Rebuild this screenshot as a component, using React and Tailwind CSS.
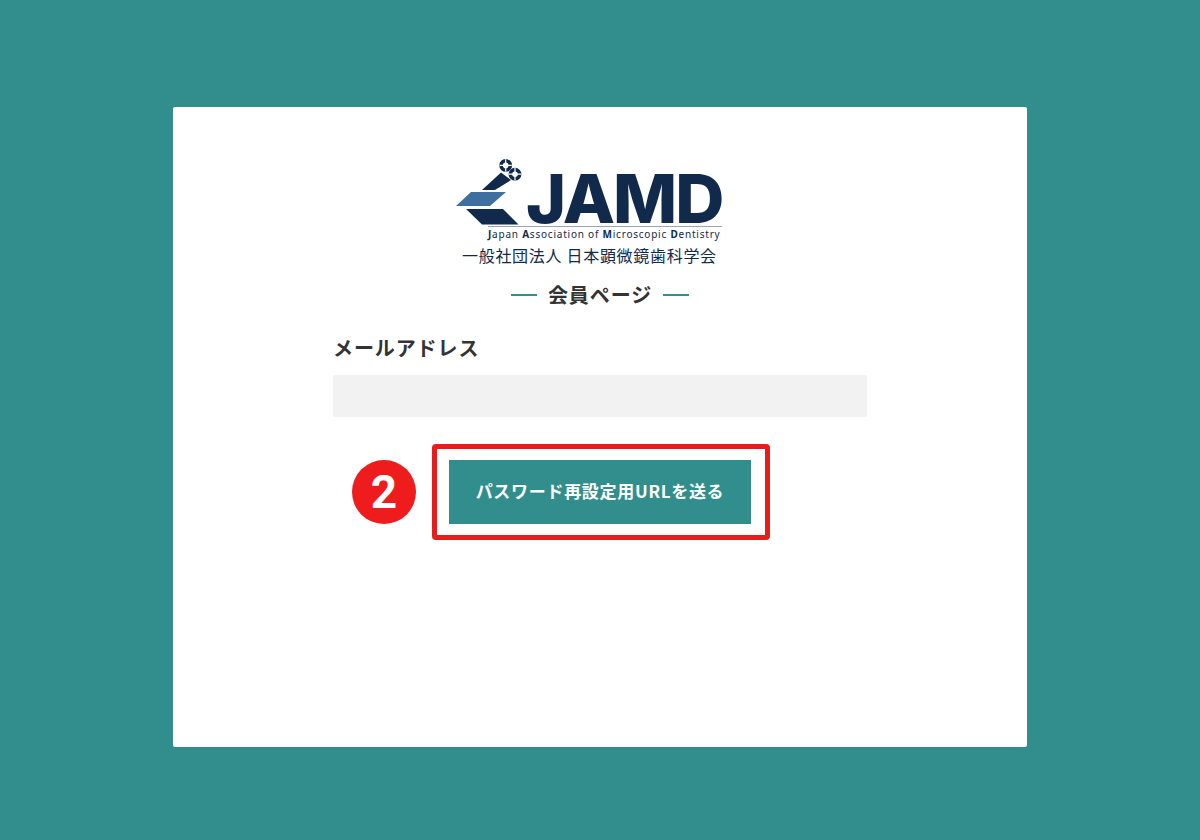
const jp = "font-['Noto_Sans_CJK_JP','Noto_Sans',sans-serif]";

function LogoMark() {
  return (
    <svg viewBox="456 158 66 68" className="w-[66px] h-[68px] shrink-0">
      <polygon points="456,206 471,192 506,192 490,206" fill="#3f6f9e" />
      <polygon points="466,209 503,209 518.5,224.5 482,224.5" fill="#11294b" />
      <polygon points="482,190 501,172.5 511,180 495,190" fill="#11294b" />
      <g fill="none" stroke="#11294b" strokeWidth="3.6">
        <circle cx="505.7" cy="165.4" r="4.6" />
        <circle cx="515" cy="174.2" r="4.6" />
      </g>
      <g stroke="#ffffff" strokeWidth="1.2">
        <path d="M505.7 159.3v12.2M499.6 165.4h12.2" />
        <path d="M515 168.1v12.2M508.9 174.2h12.2" />
      </g>
    </svg>
  );
}

function Logo() {
  return (
    <div className="w-[266px] ml-[283px]">
      <div className="flex items-start">
        <LogoMark />
        <span className="ml-[4px] mt-[14px] font-['Inter',sans-serif] font-extrabold text-[68px] leading-[52px] tracking-[-2px] text-[#11294b] whitespace-nowrap">
          JAMD
        </span>
      </div>
      <div className="ml-[32px] border-t border-[#9aa5b3] font-['Noto_Sans',sans-serif] text-[10px] leading-[14px] tracking-[0.78px] text-[#11294b] whitespace-nowrap">
        <b>J</b>apan <b>A</b>ssociation of <b>M</b>icroscopic <b>D</b>entistry
      </div>
      <div className={`${jp} mt-[2px] ml-[6px] text-[16px] leading-[24px] tracking-[0.7px] text-[#11294b] whitespace-nowrap`}>
        一般社団法人 日本顕微鏡歯科学会
      </div>
    </div>
  );
}

export default function App() {
  return (
    <div className={`${jp} w-full h-[840px] bg-[#318e8c] pt-[107px]`}>
      <div className="w-[854px] h-[640px] mx-auto bg-white rounded-[2px] pt-[51px]">
        <Logo />

        <div className="mt-[14px] flex items-center justify-center gap-[11px]">
          <span className="w-[26px] h-[1.5px] bg-[#318e8c]" />
          <h1 className="text-[20px] leading-[28px] font-bold tracking-[0.9px] text-[#333333]">会員ページ</h1>
          <span className="w-[26px] h-[1.5px] bg-[#318e8c]" />
        </div>

        <div className="w-[534px] mx-auto mt-[25px]">
          <label className="block text-[20px] leading-[28px] font-bold tracking-[0.9px] text-[#333333]">
            メールアドレス
          </label>
          <input className="block w-full h-[42px] mt-[13px] bg-[#f2f2f2] outline-none" />

          <div className="mt-[27px] pl-[19px] flex items-center gap-4">
            <div className="w-16 h-16 rounded-full bg-[#ee1c1c] flex items-center justify-center text-white font-['Roboto',sans-serif] font-bold text-[46px] leading-none">
              2
            </div>
            <div className="border-[5px] border-[#e81c1c] rounded-[4px] pt-[11px] pb-[11px] pl-[12px] pr-[14px]">
              <button className="block w-[302px] h-16 pb-[2px] bg-[#318e8c] text-white font-bold text-[17px] tracking-[0.7px] whitespace-nowrap">
                パスワード再設定用URLを送る
              </button>
            </div>
          </div>
        </div>
      </div>
    </div>
  );
}
